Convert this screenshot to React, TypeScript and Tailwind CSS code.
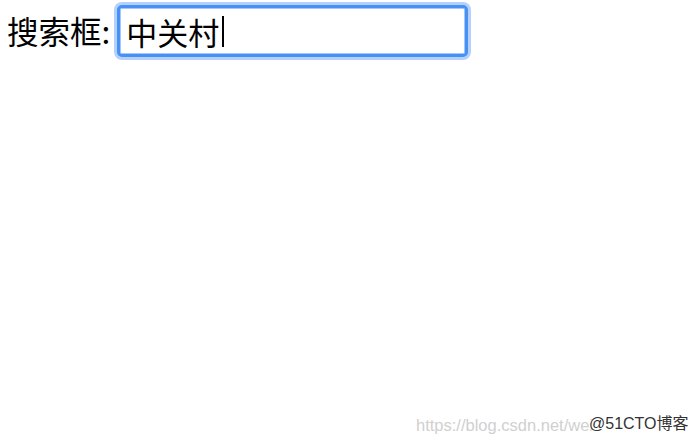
export default function App() {
  const font = "font-['Noto_Sans_CJK_SC','Noto_Sans',sans-serif]";
  return (
    <div className={`relative w-[698px] h-[444px] bg-white ${font} text-black`}>
      <div className="flex items-center pl-[7px] pt-[5px]">
        <span className="text-[31.5px] leading-none">搜索框:</span>
        <div className="ml-[7px] flex items-center w-[351px] h-[52px] rounded-[5px] border-[3px] border-[#4790f5] bg-white pl-[6px] shadow-[0_0_0_3px_#b3d1fa,inset_0_0_0_1px_#a4c6f8]">
          <span className="text-[31px] leading-none">中关村</span>
          <span className="ml-[3px] w-[1.5px] h-[31px] bg-black" />
        </div>
      </div>

      {/* watermark */}
      <div className="absolute left-[416px] top-[417px] text-[16.5px] leading-none font-['Liberation_Sans',sans-serif] text-[#d0d0d0]">
        https://blog.csdn.net/wei
      </div>
      <div className="absolute left-[589px] top-[416px] text-[16px] leading-none font-['Liberation_Sans','Noto_Sans_CJK_SC',sans-serif] text-[#333333] [text-shadow:0_0_2px_#fff,0_0_2px_#fff]">
        @51CTO博客
      </div>
    </div>
  );
}
